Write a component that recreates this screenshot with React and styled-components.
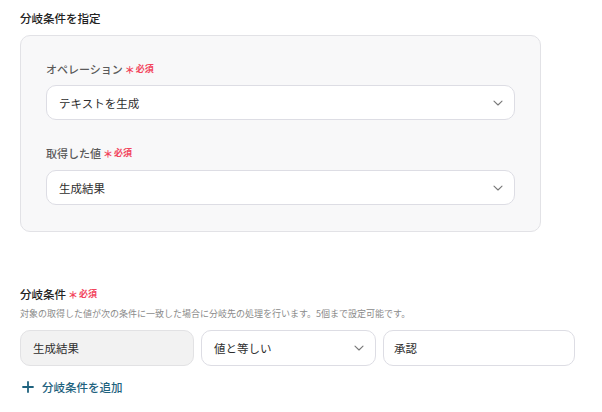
import React from "react";
import styled, { createGlobalStyle } from "styled-components";

const Global = createGlobalStyle`
  html, body { margin: 0; padding: 0; background: #ffffff; }
  body { font-family: "Noto Sans CJK JP", "Noto Sans", sans-serif; color: #333; }
`;

const Page = styled.div`
  padding: 10px 0 0 20px;
  width: 602px;
  box-sizing: border-box;
`;

const Title = styled.div`
  font-size: 11.5px;
  line-height: 16px;
  font-weight: 500;
  color: #222;
  height: 16px;
`;

const Panel = styled.div`
  margin-top: 9px;
  width: 521px;
  box-sizing: border-box;
  background: #f8f8f9;
  border: 1px solid #e2e2e6;
  border-radius: 10px;
  padding: 25px 25px 26px;
  display: flex;
  flex-direction: column;
`;

const Label = styled.div`
  display: flex;
  align-items: center;
  gap: 2px;
  font-size: ${(p) => p.$size || 11}px;
  line-height: 16px;
  font-weight: 500;
  color: ${(p) => p.$color || "#5a5a5a"};
  margin-top: ${(p) => p.$mt || 0}px;
`;

const Required = styled.span`
  display: inline-flex;
  align-items: center;
  gap: 1px;
  color: #f2455d;
  font-size: 9px;
  line-height: 16px;
  font-weight: 700;
  & > b {
    font-size: 10px;
    font-weight: 700;
    transform: translateY(1px);
  }
`;

const Select = styled.div`
  margin-top: ${(p) => p.$mt || 8}px;
  height: 35px;
  box-sizing: border-box;
  background: #fff;
  border: 1px solid #dddde4;
  border-radius: 10px;
  display: flex;
  align-items: center;
  justify-content: space-between;
  padding: 0 10px 0 12px;
  font-size: 11.5px;
  color: #2e2e2e;
`;

const Chevron = () => (
  <svg width="12" height="12" viewBox="0 0 12 12">
    <path d="M2 4.2 L6 8 L10 4.2" fill="none" stroke="#777" strokeWidth="1.1" strokeLinecap="round" strokeLinejoin="round" />
  </svg>
);

const Section = styled.div`
  margin-top: 54px;
`;

const Desc = styled.div`
  margin-top: 6px;
  font-size: 9px;
  line-height: 12px;
  color: #8a8a8a;
  white-space: nowrap;
`;

const Row = styled.div`
  margin-top: 10px;
  display: flex;
  gap: 7px;
  width: 555px;
`;

const Box = styled.div`
  height: 36px;
  box-sizing: border-box;
  width: ${(p) => p.$w}px;
  border-radius: 10px;
  border: 1px solid ${(p) => (p.$filled ? "#e2e2e4" : "#dddde4")};
  background: ${(p) => (p.$filled ? "#f2f2f2" : "#ffffff")};
  display: flex;
  align-items: center;
  justify-content: space-between;
  padding: 0 10px 0 ${(p) => p.$pl || 12}px;
  font-size: 11.5px;
  color: #2e2e2e;
`;

const AddButton = styled.div`
  margin-top: 13px;
  display: flex;
  align-items: center;
  gap: 8px;
  color: #1e627e;
  font-size: 11.5px;
  font-weight: 500;
  line-height: 16px;
  padding-left: 2px;
`;

const Plus = () => (
  <svg width="12" height="12" viewBox="0 0 12 12">
    <path d="M6 1 V11 M1 6 H11" stroke="#1e627e" strokeWidth="1.8" strokeLinecap="round" />
  </svg>
);

export default function App() {
  return (
    <>
      <Global />
      <Page>
        <Title>分岐条件を指定</Title>
        <Panel>
          <Label>
            オペレーション
            <Required><b>＊</b>必須</Required>
          </Label>
          <Select>
            <span>テキストを生成</span>
            <Chevron />
          </Select>
          <Label $mt={25}>
            取得した値
            <Required><b>＊</b>必須</Required>
          </Label>
          <Select $mt={9}>
            <span>生成結果</span>
            <Chevron />
          </Select>
        </Panel>
        <Section>
          <Label $color="#222" $size={11.5}>
            分岐条件
            <Required><b>＊</b>必須</Required>
          </Label>
          <Desc>対象の取得した値が次の条件に一致した場合に分岐先の処理を行います。5個まで設定可能です。</Desc>
          <Row>
            <Box $w={174} $filled>生成結果</Box>
            <Box $w={175}>
              <span>値と等しい</span>
              <Chevron />
            </Box>
            <Box $w={192} $pl={10}>承認</Box>
          </Row>
          <AddButton>
            <Plus />
            分岐条件を追加
          </AddButton>
        </Section>
      </Page>
    </>
  );
}
